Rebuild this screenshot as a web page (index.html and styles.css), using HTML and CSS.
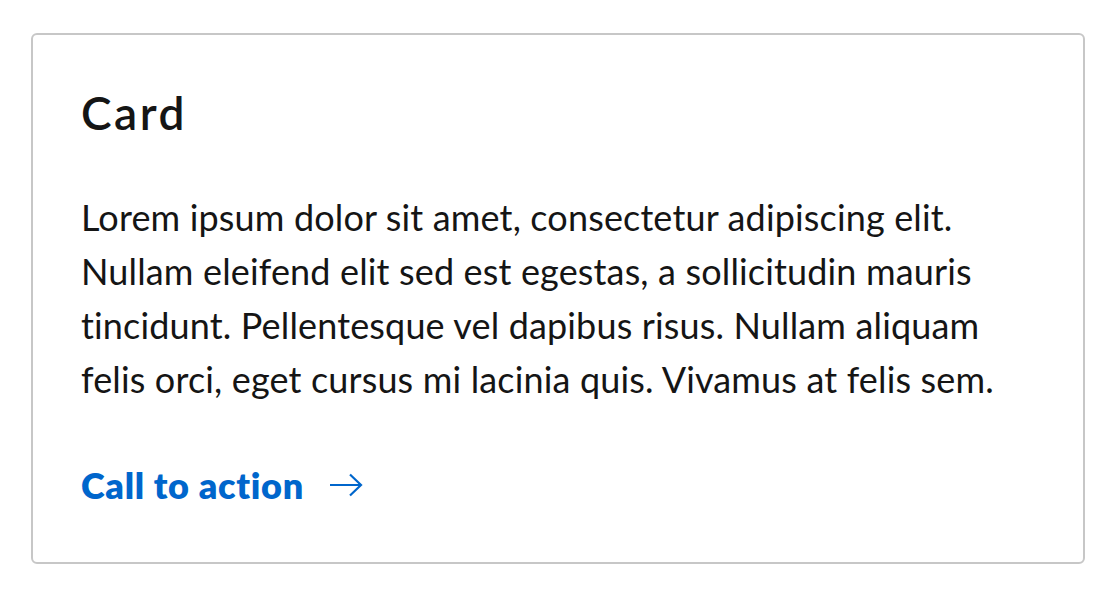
FILE: index.html
```html
<!DOCTYPE html>
<html lang="en">
<head>
    <meta charset="utf-8">
    <meta name="viewport" content="width=device-width, initial-scale=1.0">
    <title>Card</title>
    <link rel="stylesheet" href="styles.css">
</head>
<body>
    <div class="card">
        <h2 class="card-title">Card</h2>
        <p class="card-body">Lorem ipsum dolor sit amet, consectetur adipiscing elit. Nullam eleifend elit sed est egestas, a sollicitudin mauris tincidunt. Pellentesque vel dapibus risus. Nullam aliquam felis orci, eget cursus mi lacinia quis. Vivamus at felis sem.</p>
        <a href="#" class="cta">
            <span>Call to action</span>
            <svg class="cta-icon" viewBox="0 0 34 24" width="34" height="24" aria-hidden="true">
                <path d="M1 12 H32 M21 1.5 L32 12 L21 22.5" fill="none" stroke="currentColor" stroke-width="2.2"/>
            </svg>
        </a>
    </div>
</body>
</html>
```

FILE: styles.css
```css
:root {
    --text-color: #151515;
    --link-color: #0066cc;
    --border-color: #c7c7c7;
}

* {
    margin: 0;
    padding: 0;
    box-sizing: border-box;
}

body {
    font-family: Lato, 'Open Sans', sans-serif;
    background: #ffffff;
    color: var(--text-color);
    padding: 33px 35px 0 31px;
}

.card {
    border: 2px solid var(--border-color);
    border-radius: 6px;
    padding: 48px 48px 50px 48px;
    display: flex;
    flex-direction: column;
}

.card-title {
    font-size: 46px;
    font-weight: 600;
    letter-spacing: 2.5px;
    line-height: 1.3;
}

.card-body {
    margin-top: 47px;
    font-size: 36px;
    letter-spacing: 0.15px;
    line-height: 1.5;
}

.cta {
    margin-top: 52px;
    display: flex;
    align-items: center;
    gap: 25px;
    color: var(--link-color);
    text-decoration: none;
    font-size: 36px;
    font-weight: 800;
    letter-spacing: 0.7px;
    line-height: 1.5;
}
```
